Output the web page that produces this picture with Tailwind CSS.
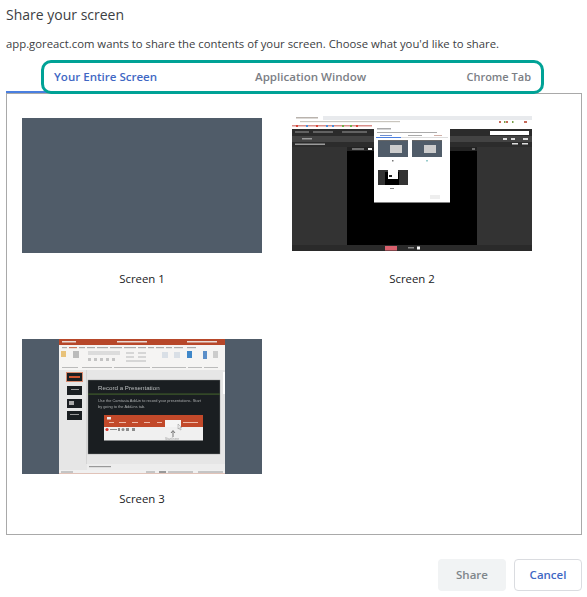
<!DOCTYPE html>
<html lang="en">
<head>
    <meta charset="UTF-8">
    <title>Share your screen</title>
    <script src="https://cdn.jsdelivr.net/npm/@tailwindcss/browser@4"></script>
</head>
<body class="bg-white font-['Open_Sans',sans-serif] text-[#3c4043] w-[587px] h-[597px] overflow-hidden">
    <div class="relative h-[597px] pl-[6px] pr-[5px] flex flex-col">
        <!-- Header -->
        <h1 class="h-[30px] pt-[5px] text-[14px] leading-[20px] text-[#3c4043]">Share your screen</h1>
        <p class="h-[33px] pt-[6px] text-[11.32px] leading-[16px] text-[#3c4043] whitespace-nowrap">app.goreact.com wants to share the contents of your screen. Choose what you'd like to share.</p>

        <!-- Tabs -->
        <div class="relative h-[30px] grid grid-cols-[203px_190px_183px] text-[11.55px] font-semibold leading-[27px] text-[#7b7e85]">
            <div class="border-b-2 border-[#4a7fe0] text-[#3f68c4] pl-[48px] whitespace-nowrap">Your Entire Screen</div>
            <div class="whitespace-nowrap pl-[46px]">Application Window</div>
            <div class="whitespace-nowrap text-right pr-[51px] text-[11px]">Chrome Tab</div>
            <!-- teal highlight drawn over the tabs -->
            <div class="absolute left-[35px] top-[-3px] w-[503px] h-[34px] rounded-[10px] border-[3px] border-[#00a296]"></div>
        </div>

        <!-- Source list -->
        <div class="h-[442px] border border-[#a9a9a9] pl-[15px] pt-[24px]">
            <div class="grid grid-cols-[240px_240px] gap-x-[30px]">
                <div class="h-[221px]">
                    <div class="h-[135px] bg-[#505c69]"></div>
                    <p class="mt-[18px] text-center text-[11.4px] leading-[16px] text-[#202124]">Screen 1</p>
                </div>
                <div class="h-[221px]">
                    <svg viewBox="0 0 240 135" class="-mt-[2px] w-[240px] h-[135px] blur-[0.3px] block">
                        <rect width="240" height="135" fill="#fff"/>
                        <rect width="240" height="4" fill="#e8eaed"/>
                        <rect width="31" height="4" fill="#fff"/>
                        <rect x="4" y="1" width="22" height="1.500" fill="#b9b3ad"/>
                        <rect x="8" y="5" width="100" height="1.200" fill="#c9c5bd"/>
                        <rect x="0" y="9" width="80" height="1.500" fill="#d98f8a"/>
                        <g fill="#4a90d9"><rect x="14" y="9" width="2" height="2"/><rect x="34" y="9" width="2" height="2"/><rect x="40" y="9" width="2" height="2"/></g>
                        <g fill="#d9483b"><rect x="4" y="9" width="2" height="2"/><rect x="24" y="9" width="2" height="2"/><rect x="64" y="9" width="2" height="2"/></g>
                        <g fill="#6fb04a"><rect x="50" y="9" width="2" height="2"/><rect x="58" y="9" width="2" height="2"/></g>
                        <g fill="#c56a5a"><rect x="207" y="5" width="2" height="2"/><rect x="214" y="5" width="2" height="2"/><rect x="232" y="5" width="3" height="2"/></g>
                        <g fill="#7aa04a"><rect x="212" y="5" width="1.500" height="2"/><rect x="220" y="5" width="1.500" height="2"/></g>
                        <rect y="13" width="240" height="122" fill="#333"/>
                        <rect y="13" width="240" height="7" fill="#2b2b2b"/>
                        <rect y="20" width="240" height="6" fill="#434343"/>
                        <rect y="26" width="240" height="5" fill="#2c2c2c"/>
                        <g fill="#9a9a9a"><rect x="3" y="15.500" width="14" height="1"/><rect x="21" y="15.500" width="20" height="1"/><rect x="50" y="15.500" width="25" height="1"/><rect x="10" y="22" width="10" height="1.500"/><rect x="3" y="27.500" width="30" height="1.500"/></g>
                        <rect x="198" y="15" width="39" height="4" fill="#fff"/>
                        <g fill="#ddd"><rect x="211" y="22" width="4" height="2"/><rect x="219" y="22" width="4" height="2"/><rect x="231" y="22" width="5" height="2"/><rect x="220" y="27" width="6" height="1.500"/><rect x="230" y="27" width="6" height="1.500"/></g>
                        <rect x="55" y="31" width="130" height="4" fill="#222"/>
                        <g fill="#bbb"><rect x="60" y="32.500" width="12" height="1"/><rect x="76" y="32" width="4" height="2" fill="#eee"/><rect x="180" y="32.500" width="3" height="1"/></g>
                        <rect x="55" y="35" width="130" height="94" fill="#000"/>
                        <rect y="129" width="240" height="6" fill="#2a2a2a"/>
                        <rect x="93" y="130" width="12" height="4.500" fill="#d9606d"/>
                        <rect x="125" y="130.500" width="3" height="3" fill="#fff"/>
                        <rect x="116" y="131" width="6" height="1.500" fill="#888"/>
                        <!-- dialog in the capture -->
                        <rect x="82" y="9" width="76" height="77.500" fill="#fff"/>
                        <rect x="85" y="12" width="14" height="1.500" fill="#aaa"/>
                        <rect x="85" y="16" width="60" height="1" fill="#aaa"/>
                        <rect x="84" y="21" width="72" height="1" fill="#ddd"/>
                        <rect x="84" y="21" width="25" height="1" fill="#4a7fe0"/>
                        <rect x="88" y="19" width="12" height="1" fill="#6f8fd0"/>
                        <rect x="116" y="19" width="14" height="1" fill="#aaa"/>
                        <rect x="142" y="19" width="8" height="1" fill="#d0b0a8"/>
                        <rect x="86" y="24" width="30" height="17" fill="#505c69"/>
                        <rect x="86" y="24" width="30" height="1" fill="#666"/>
                        <rect x="98" y="29" width="12" height="8" fill="#ccc"/>
                        <rect x="120" y="24" width="30" height="17" fill="#505c69"/>
                        <rect x="120" y="24" width="30" height="1" fill="#666"/>
                        <rect x="132" y="29" width="12" height="8" fill="#ccc"/>
                        <rect x="86" y="54" width="30" height="15" fill="#333"/>
                        <rect x="93" y="56" width="14" height="13" fill="#000"/>
                        <rect x="96" y="54" width="10" height="9" fill="#fff"/>
                        <rect x="97" y="59" width="3" height="2" fill="#222"/>
                        <rect x="100" y="44" width="1.500" height="1.500" fill="#777"/>
                        <rect x="134" y="44" width="2" height="1.500" fill="#9cc"/>
                        <rect x="98" y="72" width="4" height="1" fill="#888"/>
                        <rect x="138" y="79" width="10" height="4" fill="#eee"/>
                    </svg>
                    <p class="mt-[20px] text-center text-[11.4px] leading-[16px] text-[#202124]">Screen 2</p>
                </div>
                <div class="h-[180px]">
                    <svg viewBox="0 0 240 135" class="w-[240px] h-[135px] blur-[0.4px] block">
                        <rect width="240" height="135" fill="#505c69"/>
                        <rect x="37" y="0" width="166" height="135" fill="#e6e6e6"/>
                        <rect x="37" y="0" width="166" height="6" fill="#b7472a"/>
                        <rect x="37" y="6" width="166" height="25" fill="#f5f4f3"/>
                        <g fill="#eadcd6"><rect x="40" y="2" width="14" height="1.500"/><rect x="95" y="2" width="30" height="1.500"/><rect x="165" y="2" width="30" height="1.500"/></g>
                        <g fill="#aaa"><rect x="40" y="8" width="5" height="1.200"/><rect x="47" y="8" width="8" height="1.200" fill="#c9785c"/><rect x="57" y="8" width="6" height="1.200"/><rect x="65" y="8" width="8" height="1.200"/><rect x="75" y="8" width="11" height="1.200"/><rect x="88" y="8" width="12" height="1.200"/><rect x="102" y="8" width="12" height="1.200"/><rect x="116" y="8" width="8" height="1.200"/><rect x="126" y="8" width="6" height="1.200"/><rect x="134" y="8" width="8" height="1.200"/><rect x="144" y="8" width="6" height="1.200"/><rect x="152" y="8" width="9" height="1.200"/><rect x="165" y="8" width="9" height="1.200"/></g>
                        <g fill="#bbb"><rect x="40" y="28" width="16" height="1"/><rect x="60" y="28" width="30" height="1"/><rect x="92" y="28" width="36" height="1"/><rect x="130" y="28" width="34" height="1"/><rect x="166" y="28" width="14" height="1"/><rect x="182" y="28" width="14" height="1"/></g>
                        <rect x="39" y="12" width="5" height="6" fill="#e8c27a"/>
                        <rect x="51" y="12" width="6" height="7" fill="#bbb"/>
                        <rect x="66" y="12" width="32" height="4" fill="#dcdcdc"/>
                        <g fill="#c4c4c4"><rect x="66" y="19" width="3" height="3"/><rect x="72" y="19" width="3" height="3"/><rect x="78" y="19" width="3" height="3"/><rect x="84" y="19" width="3" height="3"/><rect x="90" y="19" width="3" height="3"/></g>
                        <g fill="#d6d6d6"><rect x="104" y="13" width="8" height="2"/><rect x="116" y="13" width="8" height="2"/><rect x="104" y="17" width="8" height="2"/><rect x="116" y="17" width="8" height="2"/><rect x="104" y="21" width="20" height="2"/></g>
                        <rect x="140" y="13" width="6" height="6" fill="#d9dfe6"/>
                        <rect x="152" y="13" width="6" height="6" fill="#d9dfe6"/>
                        <rect x="165" y="12" width="5" height="7" fill="#3f87c9"/>
                        <rect x="181" y="12" width="4" height="8" fill="#5b8fc9"/>
                        <rect x="191" y="12" width="5" height="7" fill="#ccc"/>
                        <rect x="44" y="33" width="17" height="10" fill="#d98a6e"/>
                        <rect x="45" y="34" width="15" height="8" fill="#1a1e21"/>
                        <rect x="47" y="37" width="11" height="2" fill="#d0532f"/>
                        <rect x="45" y="47" width="15" height="9" fill="#1a1e21"/>
                        <rect x="45" y="60" width="15" height="9" fill="#1a1e21"/>
                        <rect x="47" y="62" width="5" height="4" fill="#aaa"/>
                        <rect x="45" y="72" width="15" height="9" fill="#1a1e21"/>
                        <rect x="49" y="50" width="8" height="1" fill="#999"/>
                        <rect x="48" y="75" width="9" height="1" fill="#999"/>
                        <rect x="64" y="31" width="1" height="94" fill="#d5d5d5"/>
                        <rect x="66" y="41" width="132" height="74" fill="#1a1e21" stroke="#888" stroke-width="0.4"/>
                        <rect x="66" y="54.500" width="132" height="1.200" fill="#3f5a2c"/>
                        <text x="76" y="51" font-family="Liberation Sans" font-size="6.2" fill="#b9bcbd">Record a Presentation</text>
                        <text x="76" y="63" font-family="Liberation Sans" font-size="3.9" fill="#a9acad">Use the Camtasia Add-in to record your presentations. Start</text>
                        <text x="76" y="68.500" font-family="Liberation Sans" font-size="3.9" fill="#a9acad">by going to the Add-ins tab.</text>
                        <rect x="82" y="76" width="99" height="25.500" fill="#f0f0f0"/>
                        <rect x="82" y="76" width="99" height="12" fill="#c2492a"/>
                        <rect x="143" y="81" width="16" height="7" fill="#f5f5f5"/>
                        <g fill="#eeb9a8"><rect x="87" y="83" width="5" height="1"/><rect x="97" y="83" width="7" height="1"/><rect x="110" y="83" width="6" height="1"/><rect x="122" y="83" width="6" height="1"/><rect x="135" y="83" width="5" height="1"/><rect x="161" y="83" width="15" height="1"/></g>
                        <rect x="85" y="78" width="4" height="2.500" fill="#eee"/>
                        <circle cx="85" cy="90.500" r="1.600" fill="#d9342b"/>
                        <g fill="#8a8a8a"><rect x="88" y="90" width="7" height="1"/><rect x="96" y="89" width="2" height="3"/><circle cx="101" cy="90.500" r="1.500"/><rect x="104" y="89" width="3" height="3"/><rect x="110" y="89" width="3" height="3"/></g>
                        <path d="M151 98v-6M149 94l2-2.500 2 2.500" stroke="#777" stroke-width="1" fill="none"/>
                        <path d="M156 85l0 5 1.200-1 1 2 1-.5-1-2 1.500 0z" fill="#eee" stroke="#555" stroke-width="0.3"/>
                        <text x="143" y="101" font-family="Liberation Sans" font-size="3.2" fill="#999">Start here</text>
                        <rect x="65" y="125" width="138" height="6" fill="#ededed"/>
                        <rect x="67" y="127" width="22" height="1.200" fill="#999"/>
                        <rect x="37" y="131" width="166" height="4" fill="#f0f0f0"/>
                        <rect x="37" y="134.400" width="166" height=".6" fill="#d7a695"/>
                        <g fill="#999"><rect x="39" y="132.500" width="12" height="1"/><rect x="124" y="132.500" width="9" height="1"/><rect x="137" y="132" width="7" height="2"/><rect x="146" y="132.500" width="25" height="1"/><rect x="176" y="132.500" width="25" height="1"/></g>
                        <rect x="201" y="33" width="2" height="22" fill="#fff"/>
                    </svg>
                    <p class="mt-[17px] text-center text-[11.4px] leading-[16px] text-[#202124]">Screen 3</p>
                </div>
            </div>
        </div>

        <!-- Actions -->
        <div class="flex justify-end gap-[8px] pt-[24px]">
            <button class="w-[68px] h-[32px] rounded-[4px] bg-[#f1f3f4] text-[11.5px] font-semibold text-[#80868b]">Share</button>
            <button class="w-[68px] h-[32px] rounded-[4px] border border-[#dadce0] bg-white text-[11.5px] font-semibold text-[#3f68c4]">Cancel</button>
        </div>
    </div>
</body>
</html>
